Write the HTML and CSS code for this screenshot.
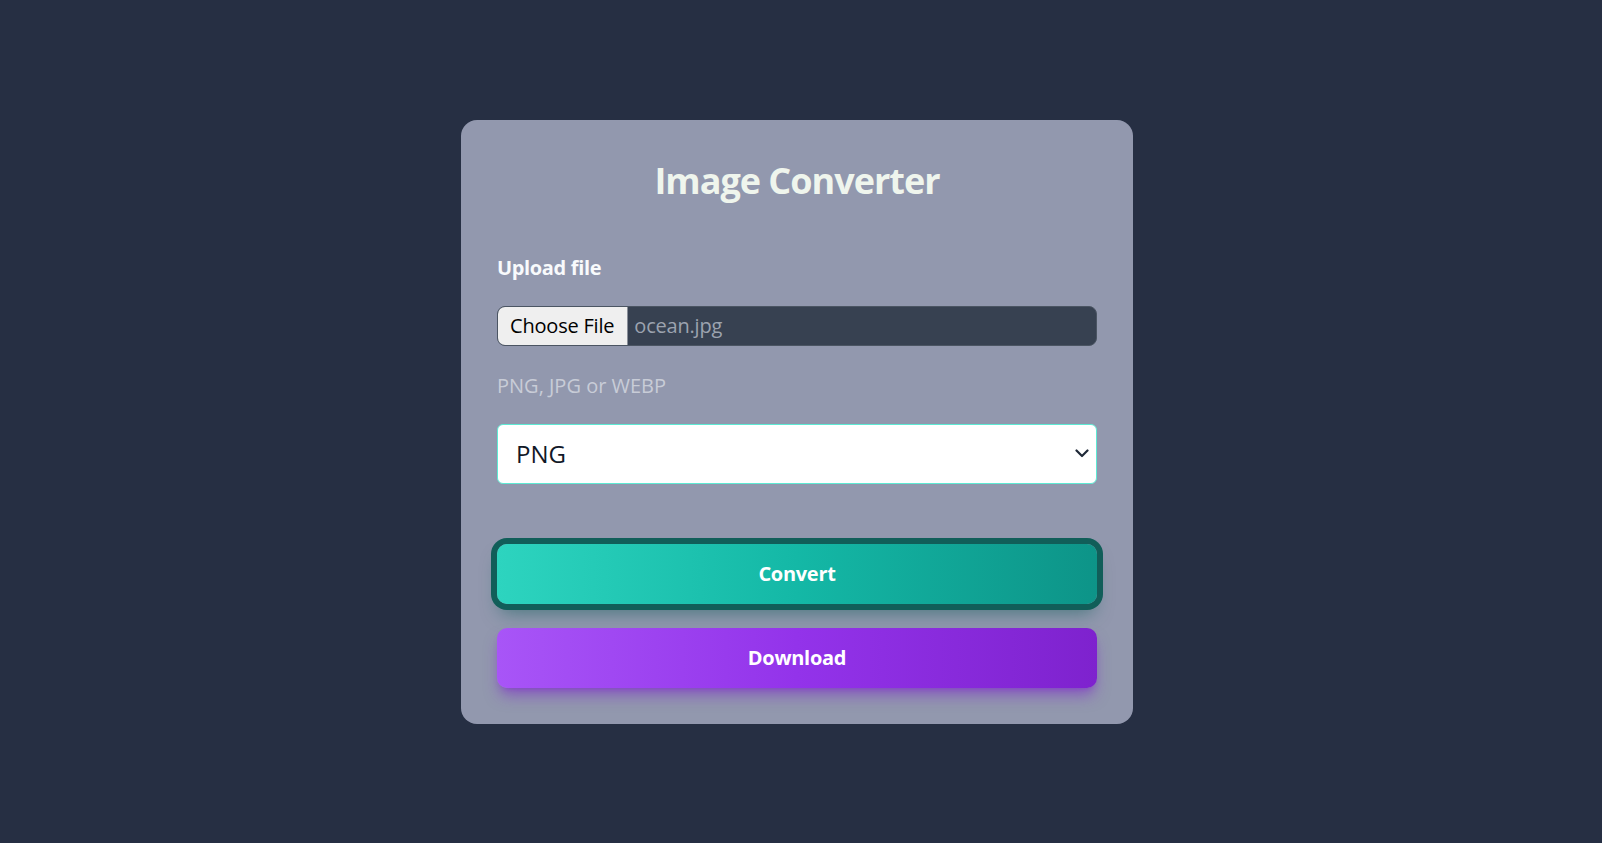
FILE: index.html
```html
<!DOCTYPE html>
<html lang="en">
<head>
<meta charset="utf-8">
<title>Image Converter</title>
<link rel="stylesheet" href="styles.css">
</head>
<body>
<main class="page">
  <section class="card">
    <h1 class="title">Image Converter</h1>
    <label class="label">Upload file</label>
    <div class="file">
      <span class="file-btn">Choose File</span>
      <span class="file-name">ocean.jpg</span>
    </div>
    <p class="help">PNG, JPG or WEBP</p>
    <div class="select">
      <span class="select-value">PNG</span>
      <svg class="chevron" width="14" height="9" viewBox="0 0 14 9"><path d="M1.5 1.5 L7 7 L12.5 1.5" fill="none" stroke="#1f2937" stroke-width="2.2" stroke-linecap="round" stroke-linejoin="round"/></svg>
    </div>
    <button class="btn btn-convert">Convert</button>
    <button class="btn btn-download">Download</button>
  </section>
</main>
</body>
</html>
```
FILE: styles.css
```css
html, body {
  margin: 0;
  padding: 0;
}
body {
  background: #262f43;
  font-family: "Open Sans", "Noto Sans", sans-serif;
}
.page {
  min-height: 843px;
  display: flex;
  align-items: center;
  justify-content: center;
  padding-right: 8px;
  box-sizing: border-box;
}
.card {
  width: 672px;
  box-sizing: border-box;
  padding: 36px;
  border-radius: 16px;
  background: #9298ae;
  display: flex;
  flex-direction: column;
}
.title {
  margin: 0;
  font-size: 36px;
  line-height: 50px;
  font-weight: 700;
  letter-spacing: -1px;
  color: #eff5ed;
  text-align: center;
}
.label {
  margin-top: 48px;
  font-size: 20px;
  line-height: 28px;
  font-weight: 700;
  letter-spacing: -0.35px;
  color: #f8fafc;
}
.file {
  margin-top: 24px;
  height: 40px;
  box-sizing: border-box;
  border: 1px solid #4b5563;
  border-radius: 8px;
  background: #374151;
  display: flex;
  align-items: stretch;
  overflow: hidden;
}
.file-btn {
  flex-shrink: 0;
  white-space: nowrap;
  background: #efefef;
  color: #000;
  font-size: 20px;
  letter-spacing: -0.2px;
  display: flex;
  align-items: center;
  padding: 0 13px 0 12px;
  border-right: 1px solid #8a8f99;
}
.file-name {
  display: flex;
  align-items: center;
  white-space: nowrap;
  margin-left: 6px;
  font-size: 20px;
  letter-spacing: -0.2px;
  color: #9ca3af;
}
.help {
  margin: 26px 0 0;
  font-size: 20px;
  line-height: 28px;
  color: #c8ccd7;
}
.select {
  margin-top: 24px;
  height: 60px;
  box-sizing: border-box;
  border: 1px solid #5eead4;
  border-radius: 6px;
  background: #fff;
  display: flex;
  align-items: center;
  justify-content: space-between;
  padding: 0 7px 0 18px;
}
.select-value {
  font-size: 24px;
  color: #111827;
}
.chevron {
  display: block;
}
.btn {
  height: 60px;
  border: none;
  border-radius: 10px;
  font-family: inherit;
  font-size: 20px;
  font-weight: 700;
  letter-spacing: -0.3px;
  color: #fff;
  padding: 0;
}
.btn-convert {
  margin-top: 60px;
  background: linear-gradient(to right, #2dd4bf, #14b8a6, #0d9488);
  box-shadow: 0 0 0 6px #115e59, 0 12px 18px -3px rgba(17, 94, 89, 0.55);
}
.btn-download {
  margin-top: 24px;
  background: linear-gradient(to right, #a855f7, #9333ea, #7e22ce);
  box-shadow: 0 10px 15px -3px rgba(126, 34, 206, 0.55), 0 4px 6px -4px rgba(126, 34, 206, 0.5);
}
```
